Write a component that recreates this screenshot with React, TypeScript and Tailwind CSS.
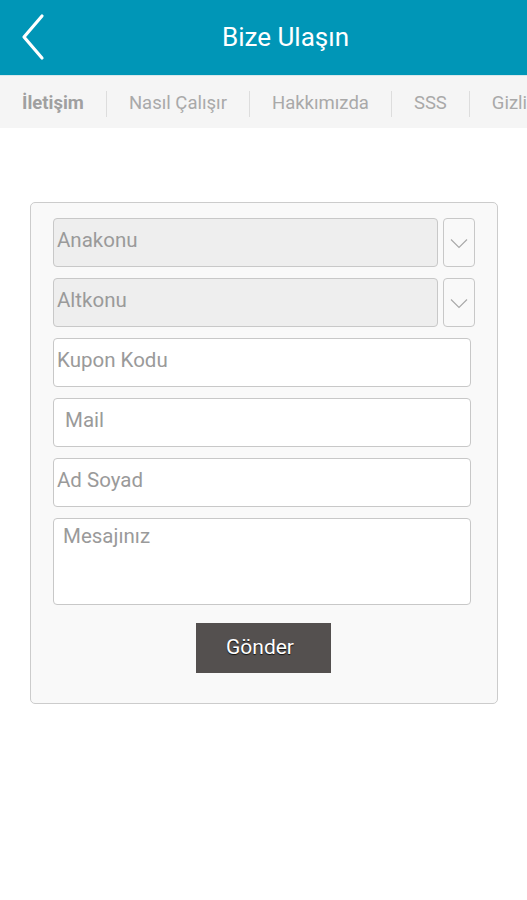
import React from 'react';

const tabs = ['İletişim', 'Nasıl Çalışır', 'Hakkımızda', 'SSS', 'Gizlilik'];

function Chevron() {
  return (
    <svg width="18" height="12" viewBox="0 0 18 12" fill="none">
      <path d="M1 2.5 L9 10.5 L17 2.5" stroke="#a8a8a8" strokeWidth="1.1" />
    </svg>
  );
}

function SelectRow({ label }: { label: string }) {
  return (
    <div className="flex gap-[5px]">
      <div className="flex h-[49px] w-[385px] items-center rounded-[4px] border border-[#c8c8c8] bg-[#eeeeee] pb-[5px] pl-[3px] text-[20.5px] text-[#9a9a9a]">
        {label}
      </div>
      <div className="flex h-[49px] w-[32px] items-center justify-center rounded-[4px] border border-[#c8c8c8] bg-[#f9f9f9]">
        <Chevron />
      </div>
    </div>
  );
}

function Field({ label, pad = 'pl-[3px]' }: { label: string; pad?: string }) {
  return (
    <div className={`flex h-[49px] w-[418px] items-center rounded-[4px] border border-[#c8c8c8] bg-white pb-[5px] ${pad} text-[20.5px] text-[#9a9a9a]`}>
      {label}
    </div>
  );
}

export default function App() {
  return (
    <div className="h-[900px] w-[527px] overflow-hidden bg-white" style={{ fontFamily: 'Roboto, "Liberation Sans", sans-serif' }}>
      <header className="relative flex h-[75px] items-center justify-center bg-[#0096b7]">
        <svg className="absolute left-[20px] top-[13px]" width="26" height="48" viewBox="0 0 26 48" fill="none">
          <path d="M22 3 L4 24 L22 45" stroke="white" strokeWidth="3.2" strokeLinecap="round" strokeLinejoin="round" />
        </svg>
        <h1 className="pl-[44px] text-[26px] text-white">Bize Ulaşın</h1>
      </header>
      <div className="h-[1px] bg-[#d8e8ec]" />
      <nav className="flex h-[52px] items-center overflow-hidden whitespace-nowrap bg-[#f5f5f5] pt-[3px] pl-[22px] text-[18.5px] text-[#a9a9a9]">
        {tabs.map((t, i) => (
          <React.Fragment key={t}>
            {i > 0 && <span className="mx-[22px] h-[26px] w-px shrink-0 bg-[#dddddd]" />}
            <span className={i === 0 ? 'font-bold text-[#a0a0a0]' : ''}>{t}</span>
          </React.Fragment>
        ))}
      </nav>
      <main className="pt-[74px] pl-[30px]">
        <div className="w-[468px] rounded-[5px] border border-[#cccccc] bg-[#f9f9f9] pt-[15px] pb-[30px] pl-[22px]">
          <div className="flex flex-col gap-[11px]">
            <SelectRow label="Anakonu" />
            <SelectRow label="Altkonu" />
            <Field label="Kupon Kodu" />
            <Field label="Mail" pad="pl-[11px]" />
            <Field label="Ad Soyad" />
            <div className="h-[87px] w-[418px] rounded-[4px] border border-[#c8c8c8] bg-white pl-[9px] pt-[2px] text-[20.5px] text-[#9a9a9a]">
              Mesajınız
            </div>
          </div>
          <div className="mt-[18px] flex pl-[143px]">
            <button className="h-[50px] w-[135px] bg-[#54504f] pr-[7px] text-[21px] text-white [text-shadow:0_1px_1px_rgba(0,0,0,0.8)]">
              Gönder
            </button>
          </div>
        </div>
      </main>
    </div>
  );
}
